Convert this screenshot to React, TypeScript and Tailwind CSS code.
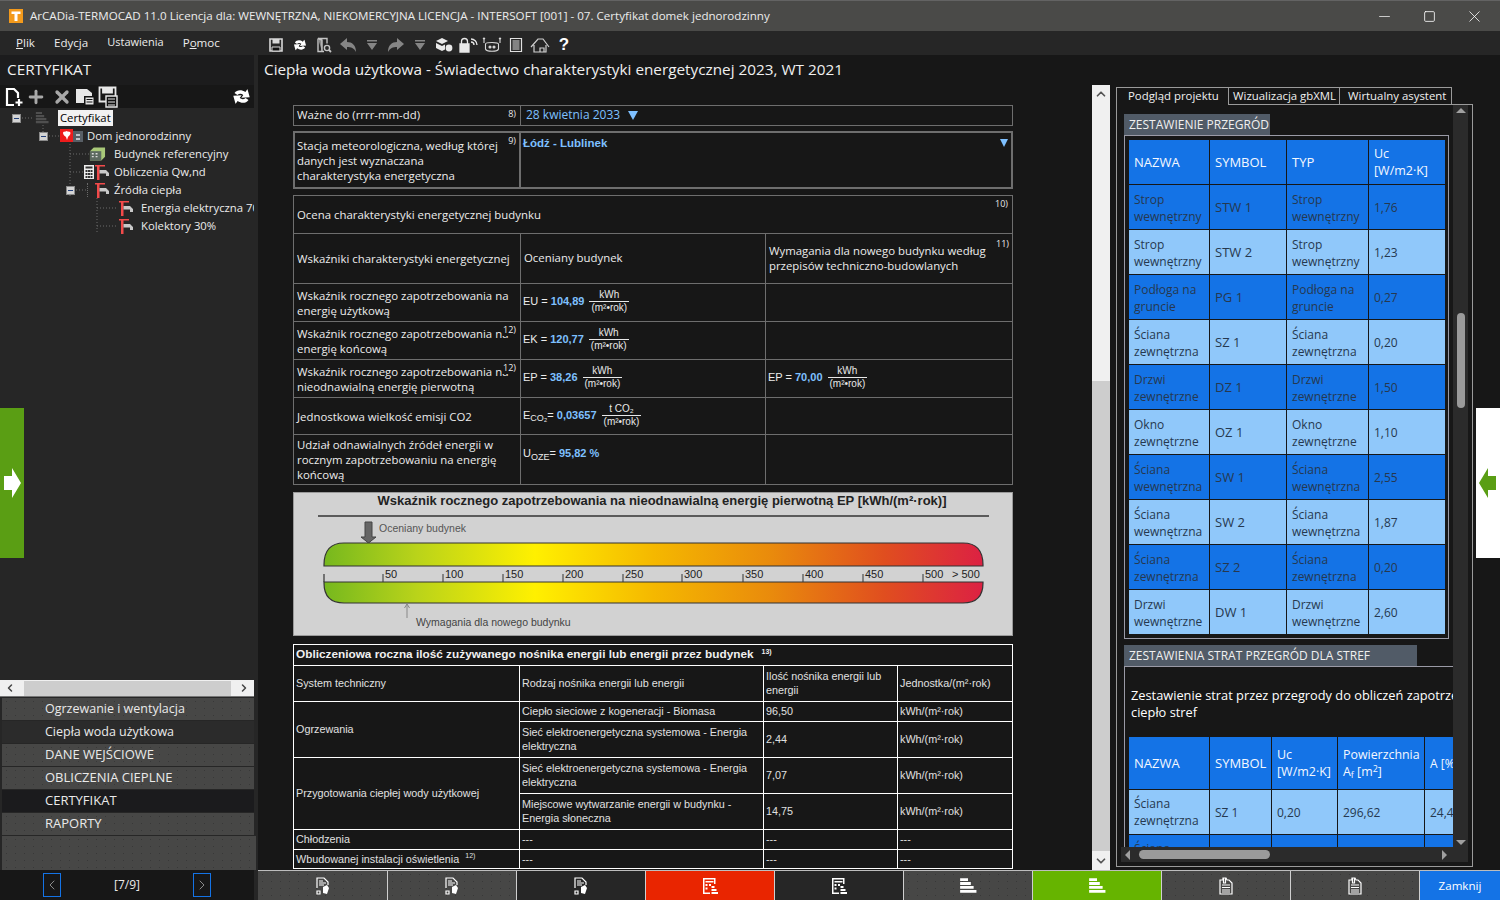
import { ChevronLeft, ChevronRight, ChevronUp, ChevronDown, Minus, Square, X, Plus } from "lucide-react";

const font = "[font-family:'Open_Sans',sans-serif]";
const arial = "[font-family:'Liberation_Sans',Arial,sans-serif]";
const dots =
  "bg-[#474746] bg-[radial-gradient(#383838_0.6px,transparent_0.8px)] bg-[length:9px_7px]";

// --- small drawn icons ---
function SaveIcon({ className = "" }: { className?: string }) {
  return (
    <svg viewBox="0 0 16 16" className={className} fill="none" stroke="currentColor" strokeWidth="1.6">
      <path d="M2 2h12v12H2z" />
      <path d="M4.5 2v4.5h7V2" fill="currentColor" stroke="none" />
      <path d="M4 10h8v4H4z" fill="#111" strokeWidth="1" />
    </svg>
  );
}

function SyncIcon({ className = "" }: { className?: string }) {
  return (
    <svg viewBox="0 0 16 16" className={className} fill="currentColor">
      <path d="M1.500 9C1.500 5.500 4.500 3 8.500 3V0l5.500 4.500L8.500 9V6C6 6 5 7 4.500 9z" />
      <path d="M14.500 7C14.500 10.500 11.500 13 7.500 13v3L2 11.500 7.500 7v3c2.500 0 3.500-1 4-3z" />
    </svg>
  );
}

function FileSearchIcon() {
  return (
    <svg viewBox="0 0 16 16" className="w-4 h-4 text-[#c4c4c4]" fill="none" stroke="currentColor" strokeWidth="1.4">
      <path d="M2 1.5h9v5M2 1.5v13h6" />
      <path d="M2 1.5l4 1.5v11.500" fill="#888" />
      <circle cx="11" cy="11" r="2.6" />
      <path d="M13 13l2 2" strokeWidth="1.8" />
    </svg>
  );
}

function ArrowBack({ flip = false }: { flip?: boolean }) {
  return (
    <svg viewBox="0 0 18 16" className={`w-[18px] h-4 text-[#858585] ${flip ? "-scale-x-100" : ""}`} fill="currentColor">
      <path d="M1 7l7-6v4c5 0 9 3 9 10-2-4-5-5-9-5v3z" />
    </svg>
  );
}

function DropMark() {
  return (
    <svg viewBox="0 0 12 12" className="w-3 h-3 text-[#858585]" fill="currentColor">
      <path d="M1 1h10v1.500H1zM1 4h10L6 11z" />
    </svg>
  );
}

function BoxesIcon() {
  return (
    <svg viewBox="0 0 18 16" className="w-[18px] h-4 text-[#e8e8e8]" fill="currentColor">
      <path d="M7 1l6 3-6 3-6-3z" />
      <path d="M1 6l6 3 3-1.500v5L7 14l-6-3z" />
      <circle cx="14" cy="11" r="3.400" />
    </svg>
  );
}

function LockWifi() {
  return (
    <svg viewBox="0 0 20 16" className="w-5 h-4 text-[#e8e8e8]" fill="none" stroke="currentColor" strokeWidth="1.300">
      <path d="M3.500 7V4.500a3 3 0 0 1 6 0V7" />
      <path d="M2 7h9v8H2z" fill="currentColor" />
      <path d="M13 5a3 3 0 0 1 3 3M13 2a6 6 0 0 1 6 6" />
    </svg>
  );
}

function BotIcon() {
  return (
    <svg viewBox="0 0 20 16" className="w-5 h-4 text-[#d8d8d8]" fill="none" stroke="currentColor" strokeWidth="1.100">
      <path d="M3.500 7c0-2 13-2 13 0v5c-1 3-12 3-13 0z" />
      <circle cx="8" cy="10" r="1" fill="currentColor" />
      <circle cx="12" cy="10" r="1" fill="currentColor" />
      <path d="M2 6V1M18 6V1M1 2l1-1 1 1M17 2l1-1 1 1" />
    </svg>
  );
}

function ClipIcon() {
  return (
    <svg viewBox="0 0 14 16" className="w-3.5 h-4 text-[#e0e0e0]" fill="none" stroke="currentColor" strokeWidth="1.200">
      <path d="M1.500 1.500h11v13h-11z" />
      <path d="M3.500 4h7M3.500 6h7M3.500 8h7M3.500 10h7M3.500 12h7" />
    </svg>
  );
}

function HouseIcon() {
  return (
    <svg viewBox="0 0 20 16" className="w-5 h-4 text-[#d0d0d0]" fill="none" stroke="currentColor" strokeWidth="1.200">
      <path d="M1 10l7-8h5l6 8M4 8v7h12V8M10 15v-4h4v4" />
    </svg>
  );
}

function NewFile() {
  return (
    <svg viewBox="0 0 18 20" className="w-[18px] h-5 text-white" fill="none" stroke="currentColor" strokeWidth="2.200">
      <path d="M9 18H2V2h7l4 4v5" />
      <path d="M14 12v7M10.500 15.500h7" />
    </svg>
  );
}

function CopyFile() {
  return (
    <svg viewBox="0 0 20 20" className="w-5 h-5 text-[#e8e8e8]" fill="currentColor">
      <path d="M1 2h11l5 4v3H9v7H1z" />
      <path d="M10 10h9v8h-9z" stroke="#111" />
      <path d="M11.500 12.500h6M11.500 15h6" stroke="#111" strokeWidth="1" />
    </svg>
  );
}

function SaveList() {
  return (
    <svg viewBox="0 0 20 22" className="w-5 h-[22px] text-[#e8e8e8]" fill="none" stroke="currentColor" strokeWidth="1.800">
      <path d="M1.500 1.500h16v14h-16z" />
      <path d="M5 1.500v5h9v-5" fill="currentColor" />
      <path d="M8 10h11v11H8z" fill="#111" strokeWidth="1.400" />
      <path d="M10 13h7M10 16h7M10 19h7" strokeWidth="1.200" />
    </svg>
  );
}

function Faucet({ className = "" }: { className?: string }) {
  return (
    <svg viewBox="0 0 16 16" className={`w-4 h-4 shrink-0 ${className}`}>
      <path d="M1 1h10v1.500H1zM3 2.500h2.500V16H3z" fill="#f24a4a" />
      <path d="M5.500 6H12l3 3v3h-3V9.500H5.500z" fill="#c9c9c9" />
    </svg>
  );
}

function StackIcon({ className = "" }: { className?: string }) {
  return (
    <svg viewBox="0 0 16 16" className={className} fill="currentColor">
      <path d="M1 1h7v2.500H1zM1 4.500h9.500V7H1zM1 8h12v2.500H1zM1 11.500h14.500V14H1z" />
    </svg>
  );
}

function PageEdit() {
  return (
    <svg viewBox="0 0 14 18" className="w-3.5 h-[18px] text-white" fill="none" stroke="currentColor" strokeWidth="1.200">
      <path d="M1 11V1h7l4 4v3M1 17v-3h3v3z" />
      <path d="M3 4h4M3 6h7M3 8h5" />
      <path d="M7 10l4-2 2 3-2 6-4-1z" fill="currentColor" stroke="none" />
    </svg>
  );
}

function CalcList() {
  return (
    <svg viewBox="0 0 16 18" className="w-4 h-[18px] text-white" fill="currentColor">
      <path d="M1 1h12v1.500H1zM1 1h1.500v16H1zM12 1h1.500v6H12zM1 15.500h7V17H1z" />
      <path d="M3.500 4h8v1.500h-8zM3.500 7h2v2h-2zM7 7h2v2H7zM3.500 10.500h2v2h-2zM9.500 9h3v2h-3zM9.500 12h5v2h-5zM9.500 15h6.500v2H9.500z" />
    </svg>
  );
}

function PageList() {
  return (
    <svg viewBox="0 0 14 18" className="w-3.5 h-[18px] text-white" fill="none" stroke="currentColor" strokeWidth="1.200">
      <path d="M4 1h3l1 2h2l3 3v11H1V3h3z" />
      <path d="M3 8h8M3 10.500h8M3 13h8M3 15h8" />
      <path d="M4.500 1v5h2V1" />
    </svg>
  );
}

// --- left tree ---
function ExpandBox() {
  return (
    <span className="w-[9px] h-[9px] bg-[#d4d4d4] border border-[#8a8a8a] flex items-center justify-center shrink-0">
      <span className="w-[5px] h-px bg-[#23407a]" />
    </span>
  );
}

const treeRows = [
  { pl: "pl-[12px]", box: true, icon: "stack", label: "Certyfikat", selected: true },
  { pl: "pl-[39px]", box: true, icon: "home", label: "Dom jednorodzinny" },
  { pl: "pl-[89px]", icon: "cube", label: "Budynek referencyjny" },
  { pl: "pl-[84px]", icon: "calc", label: "Obliczenia Qw,nd" },
  { pl: "pl-[66px]", box: true, icon: "source", label: "Źródła ciepła" },
  { pl: "pl-[118px]", icon: "faucet", label: "Energia elektryczna 70%" },
  { pl: "pl-[118px]", icon: "faucet", label: "Kolektory 30%" },
];

function TreeIcon({ kind }: { kind: string }) {
  if (kind === "stack") return <StackIcon className="w-3.5 h-3.5 text-[#4f4f4f] ml-[12px] mr-[9px] shrink-0" />;
  if (kind === "home")
    return (
      <svg viewBox="0 0 24 14" className="w-6 h-3.5 ml-[10px] mr-[3px] shrink-0">
        <path d="M0 0h13v13H0z" fill="#ee1c1c" />
        <path d="M6.500 2c1 1 4 0 4 2s-2 3-2.500 4l-1 3-1-3C5 7 3 6 3 4s2.500-1 3.500-2z" fill="#fff" />
        <path d="M13 2h10v11H13z" fill="#585f66" />
        <path d="M16 5h4v2h-4zM16 9h4v2h-4z" fill="#c0c4c8" />
      </svg>
    );
  if (kind === "cube")
    return (
      <svg viewBox="0 0 18 16" className="w-[17px] h-4 mr-2 shrink-0">
        <path d="M1 5l4-4h12v10l-4 4H1z" fill="#a8c878" />
        <path d="M1 5h12v10H1z" fill="#5c6a60" />
        <path d="M3 7h2v1.500H3zM7 7h2v1.500H7zM3 10h2v1.500H3zM7 10h2v1.500H7z" fill="#ddd" />
      </svg>
    );
  if (kind === "calc")
    return (
      <span className="flex items-center mr-[4px] shrink-0">
        <svg viewBox="0 0 10 14" className="w-2.5 h-3.5">
          <path d="M0 0h10v14H0z" fill="#eee" />
          <path d="M1.500 1.500h7v2h-7zM1.500 5h2v2h-2zM4 5h2v2H4zM6.500 5h2v2h-2zM1.500 8h2v2h-2zM4 8h2v2H4zM6.500 8h2v2h-2zM1.500 11h2v2h-2zM4 11h2v2H4zM6.500 11h2v2h-2z" fill="#333" />
        </svg>
        <Faucet />
      </span>
    );
  if (kind === "source")
    return (
      <span className="flex items-center ml-[10px] mr-[4px] shrink-0">
        <span className="w-[3px] h-3.5 mr-[4px] border-l border-dotted border-[#6a6a6a]" />
        <Faucet />
      </span>
    );
  return <Faucet className="mr-[7px]" />;
}

function LeftPanel() {
  return (
    <aside className="w-[258px] shrink-0 flex flex-col bg-[#262626] relative">
      <div className="h-[30px] w-[254px] flex items-center px-[7px] pb-[2px] text-[15.300px] text-[#f0f0f0] bg-[#1c1c1d]">CERTYFIKAT</div>
      <div className="h-[23px] w-[254px] bg-[#171717] flex items-center pl-[5px] pr-[3px] gap-[3px]">
        <NewFile />
        <Plus className="w-5 h-5 text-[#a8a8a8]" strokeWidth={3.5} />
        <X className="w-5 h-5 text-[#a8a8a8] ml-[3px]" strokeWidth={4} />
        <CopyFile />
        <SaveList />
        <SyncIcon className="w-[19px] h-[19px] text-white ml-auto rotate-[35deg]" />
      </div>
      <div className="flex-1 relative w-[254px] overflow-hidden pt-[1px]">
        <svg className="absolute left-0 top-0 w-[254px] h-[130px] text-[#6a6a6a]" fill="none" stroke="currentColor" strokeDasharray="1 2">
          <path d="M22 10h11M43 14v13M49 28h10M70 36v54M70 46h19M70 64h14M76 82h10M97 90v36M97 100h19M97 118h19" />
        </svg>
        {treeRows.map((r) => (
          <div key={r.label} className={`h-[18px] flex items-center whitespace-nowrap text-[11.300px] text-[#ececec] relative ${r.pl}`}>
            {r.box && <span className="mr-[2px]"><ExpandBox /></span>}
            <TreeIcon kind={r.icon} />
            {r.selected ? (
              <span className="bg-[#f2f2f2] text-black px-[2px] h-4 flex items-center">{r.label}</span>
            ) : (
              <span>{r.label}</span>
            )}
          </div>
        ))}
      </div>
      <div className="h-[17px] w-[254px] bg-[#f0f0f0] flex items-center justify-between px-[4px] border-b border-[#777]">
        <ChevronLeft className="w-3 h-3 text-[#444]" strokeWidth={3} />
        <div className="h-[15px] w-[207px] bg-[#cdcdcd]" />
        <ChevronRight className="w-3 h-3 text-[#444]" strokeWidth={3} />
      </div>
      <div className="pl-[2px] w-[254px] flex flex-col gap-px pt-px text-[#eaeaea]">
        {[
          { t: "Ogrzewanie i wentylacja", c: `${dots} text-[12.500px]` },
          { t: "Ciepła woda użytkowa", c: "bg-[#2b2b2b] text-[12.500px]" },
          { t: "DANE WEJŚCIOWE", c: `${dots} text-[13px]` },
          { t: "OBLICZENIA CIEPLNE", c: `${dots} text-[13px]` },
          { t: "CERTYFIKAT", c: "bg-[#1b1b1d] text-[13px]" },
          { t: "RAPORTY", c: `${dots} text-[13px]` },
        ].map((i) => (
          <div key={i.t} className={`h-[22px] flex items-center pl-[43px] ${i.c}`}>{i.t}</div>
        ))}
      </div>
      <div className={`h-[34px] w-[254px] ml-[2px] mt-px ${dots}`} />
      <div className="h-[30px] bg-[#171717] w-[254px] flex items-center text-[12px] text-[#eaeaea]">
        <button className="ml-[43px] w-[18px] h-[24px] border border-[#1473e6] flex items-center justify-center">
          <ChevronLeft className="w-4 h-4 text-[#8a8a8a]" strokeWidth={1.500} />
        </button>
        <span className="flex-1 text-center">[7/9]</span>
        <button className="mr-[43px] w-[18px] h-[24px] border border-[#1473e6] flex items-center justify-center">
          <ChevronRight className="w-4 h-4 text-[#8a8a8a]" strokeWidth={1.500} />
        </button>
      </div>
    </aside>
  );
}

// --- certificate document ---
function Sup({ children, className = "" }: { children: string; className?: string }) {
  return <span className={`absolute top-[3px] right-[4px] text-[9px] leading-[10px] text-[#e8e8e8] ${className}`}>{children}</span>;
}

function Frac({ top, unit = "(m²•rok)" }: { top: string; unit?: string }) {
  return (
    <span className={`inline-flex flex-col items-center text-[10px] leading-[12px] text-[#e8e8e8] ${arial} ml-[2px]`}>
      <span className="border-b border-[#e8e8e8] px-[2px] w-full text-center">{top}</span>
      <span className="px-[2px]">{unit}</span>
    </span>
  );
}

function Val({ children }: { children: string }) {
  return <b className="text-[#7ec0ff] text-[11px] mx-[3px]">{children}</b>;
}

function IndexRow({
  h,
  label,
  sup,
  left,
  right,
}: {
  h: string;
  label: string[];
  sup?: string;
  left: React.ReactNode;
  right?: React.ReactNode;
}) {
  return (
    <>
      <div className={`${h} border-r border-b border-[#6e6e6e] relative flex flex-col justify-center px-[3px] leading-[15px] overflow-hidden whitespace-nowrap`}>
        {label.map((l) => <span key={l}>{l}</span>)}
        {sup && <span className="absolute top-[2px] right-0 pl-px pr-[4px] bg-[#171717] text-[9px] leading-[12px]">{sup}</span>}
      </div>
      <div className={`${h} border-r border-b border-[#6e6e6e] flex items-center pl-[2px] pb-[2px] text-[11px] ${arial}`}>{left}</div>
      <div className={`${h} border-b border-[#6e6e6e] flex items-center pl-[2px] pb-[2px] text-[11px] ${arial}`}>{right}</div>
    </>
  );
}

function Gauge() {
  const ticks = [
    [65, "50"], [125, "100"], [185, "150"], [245, "200"], [305, "250"],
    [364, "300"], [425, "350"], [485, "400"], [545, "450"], [605, "500"],
  ] as const;
  return (
    <div className={`h-[144px] bg-[#d2d2d2] border border-[#9a9a9a] mt-[7px] flex flex-col ${arial}`}>
      <div className="text-center text-[13px] font-bold text-[#222] leading-[16px] pl-[18px]">
        Wskaźnik rocznego zapotrzebowania na nieodnawialną energię pierwotną EP [kWh/(m²·rok)]
      </div>
      <svg viewBox="0 0 718 126" className="w-[718px] h-[126px]">
        <defs>
          <linearGradient id="scale" x1="0" x2="1" y1="0" y2="0">
            <stop offset="0" stopColor="#76b81e" />
            <stop offset="0.14" stopColor="#b9d31a" />
            <stop offset="0.32" stopColor="#fff000" />
            <stop offset="0.5" stopColor="#f5b800" />
            <stop offset="0.68" stopColor="#e98a0c" />
            <stop offset="0.85" stopColor="#e04e1f" />
            <stop offset="1" stopColor="#dc2143" />
          </linearGradient>
        </defs>
        <path d="M24 7h671" stroke="#333" strokeWidth="1.500" />
        <path d="M71 13h7v15h4l-7.500 6-7.500-6h4z" fill="#666" stroke="#444" />
        <text x="85" y="23" fontSize="10.500" fill="#555">Oceniany budynek</text>
        <path d="M30 57V56q0-22 20-22h619q20 0 20 22v1z" fill="url(#scale)" stroke="#333" strokeWidth="1.200" />
        <path d="M30 73h659v1q0 20-20 20H50q-20 0-20-20z" fill="url(#scale)" stroke="#333" strokeWidth="1.200" />
        <path d="M30 65v8" stroke="#333" strokeWidth="1.200" />
        {ticks.map(([x, t]) => (
          <g key={t}>
            <path d={`M${x + 24} 65v8`} stroke="#333" />
            <text x={x + 26} y="69" fontSize="11" fill="#222">{t}</text>
          </g>
        ))}
        <text x="658" y="69" fontSize="11" fill="#222">{"> 500"}</text>
        <path d="M113 109V95M110.500 99l2.500-4 2.500 4" stroke="#888" fill="none" />
        <text x="122" y="117" fontSize="10.500" fill="#444">Wymagania dla nowego budynku</text>
      </svg>
    </div>
  );
}

function CarrierTable() {
  const c = "border-r border-b border-white flex items-center px-[2px] pb-px leading-[14px] overflow-hidden";
  const last = "border-b border-white flex items-center px-[2px] pb-px leading-[14px]";
  return (
    <div className={`mt-[8px] border-t border-l border-r border-white text-[10.800px] text-[#e0e0e0] ${arial}`}>
      <div className="h-[21px] border-b border-white flex items-center px-[2px] text-[11.800px] font-bold text-[#f0f0f0] relative">
        Obliczeniowa roczna ilość zużywanego nośnika energii lub energii przez budynek
        <span className="text-[7px] ml-[8px] -mt-[6px]">13)</span>
      </div>
      <div className="grid grid-cols-[226px_244px_134px_114px] grid-rows-[36px_20px_36px_36px_36px_20px_19px]">
        <div className={c}>System techniczny</div>
        <div className={c}>Rodzaj nośnika energii lub energii</div>
        <div className={c}>Ilość nośnika energii lub energii</div>
        <div className={last}>Jednostka/(m²·rok)</div>

        <div className={`${c} row-span-2`}>Ogrzewania</div>
        <div className={c}>Ciepło sieciowe z kogeneracji - Biomasa</div>
        <div className={c}>96,50</div>
        <div className={last}>kWh/(m²·rok)</div>
        <div className={c}>Sieć elektroenergetyczna systemowa - Energia elektryczna</div>
        <div className={c}>2,44</div>
        <div className={last}>kWh/(m²·rok)</div>

        <div className={`${c} row-span-2`}>Przygotowania ciepłej wody użytkowej</div>
        <div className={c}>Sieć elektroenergetyczna systemowa - Energia elektryczna</div>
        <div className={c}>7,07</div>
        <div className={last}>kWh/(m²·rok)</div>
        <div className={c}>Miejscowe wytwarzanie energii w budynku - Energia słoneczna</div>
        <div className={c}>14,75</div>
        <div className={last}>kWh/(m²·rok)</div>

        <div className={c}>Chłodzenia</div>
        <div className={c}>---</div>
        <div className={c}>---</div>
        <div className={last}>---</div>

        <div className={c}>
          Wbudowanej instalacji oświetlenia<span className="text-[7px] ml-[6px] -mt-[6px]">12)</span>
        </div>
        <div className={c}>---</div>
        <div className={c}>---</div>
        <div className={last}>---</div>
      </div>
    </div>
  );
}

function Certificate() {
  return (
    <div className="flex-1 min-w-0 bg-[#171717] pt-[20px] pl-[35px] overflow-hidden text-[11.400px] text-[#ececec]">
      <div className="w-[720px]">
        <div className="h-[21px] border border-[#6e6e6e] flex">
          <div className="w-[227px] border-r border-[#6e6e6e] px-[3px] pb-px flex items-center relative">
            Ważne do (rrrr-mm-dd)
            <Sup>8)</Sup>
          </div>
          <div className="px-[5px] pb-[2px] flex items-center text-[12px] text-[#7ec0ff]">
            28 kwietnia 2033
            <span className="ml-[8px] mt-[1px] w-0 h-0 border-x-[5px] border-x-transparent border-t-[9px] border-t-[#7ec0ff]" />
          </div>
        </div>

        <div className="h-[58px] mt-[5px] border-2 border-[#6e6e6e] flex">
          <div className="w-[226px] border-r-2 border-[#6e6e6e] px-[2px] flex flex-col justify-center leading-[15px] pt-[1px] relative whitespace-nowrap">
            <span>Stacja meteorologiczna, według której</span>
            <span>danych jest wyznaczana</span>
            <span>charakterystyka energetyczna</span>
            <Sup className="!right-[3px]">9)</Sup>
          </div>
          <div className={`flex-1 flex justify-between px-[2px] pt-[2px] text-[#7ec0ff] ${arial} text-[11.500px] font-bold`}>
            <span>Łódź - Lublinek</span>
            <span className="mt-[4px] mr-[1px] w-0 h-0 border-x-[4px] border-x-transparent border-t-[8px] border-t-[#7ec0ff]" />
          </div>
        </div>

        <div className="mt-[6px] border-t border-l border-r border-[#6e6e6e]">
          <div className="h-[38px] border-b border-[#6e6e6e] flex items-center px-[3px] relative">
            Ocena charakterystyki energetycznej budynku
            <Sup>10)</Sup>
          </div>
          <div className="grid grid-cols-[227px_245px_246px]">
            <IndexRow h="h-[50px]" label={["Wskaźniki charakterystyki energetycznej"]} left={<span className={`${font} text-[11.400px] pl-[1px]`}>Oceniany budynek</span>} right={
              <span className={`${font} text-[11.400px] leading-[15px] pl-[1px] pr-[15px] relative`}>
                Wymagania dla nowego budynku według przepisów techniczno-budowlanych
                <span className="absolute -top-[7px] right-[3px] text-[9px]">11)</span>
              </span>
            } />
            <IndexRow h="h-[38px]" label={["Wskaźnik rocznego zapotrzebowania na", "energię użytkową"]} left={<>EU =<Val>104,89</Val><Frac top="kWh" /></>} />
            <IndexRow h="h-[38px]" sup="12)" label={["Wskaźnik rocznego zapotrzebowania na", "energię końcową"]} left={<>EK =<Val>120,77</Val><Frac top="kWh" /></>} />
            <IndexRow h="h-[38px]" sup="12)" label={["Wskaźnik rocznego zapotrzebowania na", "nieodnawialną energię pierwotną"]} left={<>EP =<Val>38,26</Val><Frac top="kWh" /></>} right={<>EP =<Val>70,00</Val><Frac top="kWh" /></>} />
            <IndexRow h="h-[37px]" label={["Jednostkowa wielkość emisji CO2"]} left={<>E<sub className="text-[9px] -bottom-[3px]">CO₂</sub>=<Val>0,03657</Val><Frac top="t CO₂" /></>} />
            <IndexRow h="h-[50px]" label={["Udział odnawialnych źródeł energii w", "rocznym zapotrzebowaniu na energię", "końcową"]} left={<span className="-mt-[10px]">U<sub className="text-[9px] -bottom-[3px]">OZE</sub>=<Val>95,82 %</Val></span>} />
          </div>
        </div>

        <Gauge />
        <CarrierTable />
      </div>
    </div>
  );
}

// --- right panel ---
const walls = [
  ["Strop wewnętrzny", "STW 1", "Strop wewnętrzny", "1,76"],
  ["Strop wewnętrzny", "STW 2", "Strop wewnętrzny", "1,23"],
  ["Podłoga na gruncie", "PG 1", "Podłoga na gruncie", "0,27"],
  ["Ściana zewnętrzna", "SZ 1", "Ściana zewnętrzna", "0,20"],
  ["Drzwi zewnętrzne", "DZ 1", "Drzwi zewnętrzne", "1,50"],
  ["Okno zewnętrzne", "OZ 1", "Okno zewnętrzne", "1,10"],
  ["Ściana wewnętrzna", "SW 1", "Ściana wewnętrzna", "2,55"],
  ["Ściana wewnętrzna", "SW 2", "Ściana wewnętrzna", "1,87"],
  ["Ściana zewnętrzna", "SZ 2", "Ściana zewnętrzna", "0,20"],
  ["Drzwi wewnętrzne", "DW 1", "Drzwi wewnętrzne", "2,60"],
];

function SectionHead({ className, children }: { className: string; children: string }) {
  return <div className={`h-[21px] bg-[#515b67] flex items-center px-[5px] text-[12px] whitespace-nowrap text-[#f0f0f0] ${className}`}>{children}</div>;
}

function RightPanel() {
  return (
    <div className={`w-[390px] shrink-0 bg-[#171717] pl-[6px] pt-[2px] ${font}`}>
      <div className="w-[357px] h-[780px] flex flex-col text-[12px]">
        <div className="flex h-[18px] text-[11.400px] leading-[15px] whitespace-nowrap text-[#f0f0f0] relative z-10">
          <div className="w-[112px] border-l border-t border-[#9a9a9a] bg-[#171717] h-[18px] pl-[11px]">Podgląd projektu</div>
          <div className="w-[112px] border-l border-t border-r border-b border-[#9a9a9a] pl-[4px]">Wizualizacja gbXML</div>
          <div className="w-[112px] border-t border-r border-b border-[#9a9a9a] pl-[8px]">Wirtualny asystent</div>
        </div>
        <div className="flex-1 min-h-0 -mt-px border border-[#9a9a9a] flex flex-col pl-[4px] pr-[4px] pb-[4px]">
          <div className="flex-1 min-h-0 flex">
            <div className="flex-1 min-w-0 overflow-hidden pl-[3px] pt-[9px]">
              <SectionHead className="w-[146px]">ZESTAWIENIE PRZEGRÓD</SectionHead>
              <div className="w-[325px] border border-[#9a9aa6] p-[4px]">
                <div className="grid grid-cols-[80px_76px_81px_76px] gap-px">
                  {["NAZWA", "SYMBOL", "TYP", "Uc [W/m2·K]"].map((h) => (
                    <div key={h} className={`h-[44px] bg-[#1473e6] text-[#f4f8ff] flex items-center px-[5px] leading-[17px] ${h === "Uc [W/m2·K]" ? "text-[12.500px]" : "text-[13px]"}`}>{h}</div>
                  ))}
                  {walls.map((row, i) =>
                    row.map((t, j) => (
                      <div key={`${i}-${j}`} className={`h-[44px] flex items-center px-[5px] pt-px leading-[17px] text-[#26384f] ${j === 1 ? "text-[13px]" : ""} ${i % 2 === 0 ? "bg-[#1473e6]" : "bg-[#90c8fa]"}`}>{t}</div>
                    ))
                  )}
                </div>
              </div>
              <SectionHead className="w-[293px] mt-[6px]">ZESTAWIENIA STRAT PRZEGRÓD DLA STREF</SectionHead>
              <div className="w-[420px] border-t border-l border-[#9a9aa6] pl-[4px]">
                <p className="w-[360px] text-[12.800px] leading-[17px] text-white pl-[2px] pt-[20px] pb-[16px] whitespace-nowrap">
                  Zestawienie strat przez przegrody do obliczeń zapotrzebowania na<br />ciepło stref
                </p>
                <div className="grid grid-cols-[80px_61px_65px_86px_90px] gap-px">
                  {[
                    <span className="text-[13px]">NAZWA</span>,
                    <span className="text-[13px]">SYMBOL</span>,
                    <span className="text-[12.500px]">Uc [W/m2·K]</span>,
                    <span className="text-[12.400px]">Powierzchnia A<sub className="text-[9px]">f</sub> [m<sup className="text-[9px]">2</sup>]</span>,
                    <>A [%]</>,
                  ].map((h, i) => (
                    <div key={i} className="h-[52px] bg-[#1473e6] text-[#f4f8ff] flex items-center px-[5px] leading-[17px]"><span>{h}</span></div>
                  ))}
                  {[
                    ["Ściana zewnętrzna", "SZ 1", "0,20", "296,62", "24,45"],
                    ["Ściana zewnętrzna", "SW 1", "2,55", "18,40", "3,10"],
                  ].map((row, i) =>
                    row.map((t, j) => (
                      <div key={`${i}-${j}`} className={`h-[44px] flex items-center px-[5px] leading-[17px] text-[#26384f] ${i === 0 ? "bg-[#90c8fa]" : "bg-[#1473e6]"}`}>{t}</div>
                    ))
                  )}
                </div>
              </div>
            </div>
            <div className="w-[15px] shrink-0 bg-[#2b2b2b] flex flex-col items-center justify-between pt-[3px] pb-[2px]">
              <span className="w-0 h-0 border-x-[5px] border-x-transparent border-b-[5px] border-b-[#a0a0a0]" />
              <div className="w-[8px] h-[95px] bg-[#9a9a9a] rounded-sm -mt-[232px]" />
              <span className="w-0 h-0 border-x-[5px] border-x-transparent border-t-[5px] border-t-[#a0a0a0]" />
            </div>
          </div>
          <div className="h-[15px] bg-[#2b2b2b] flex items-center justify-between px-[4px] shrink-0">
            <span className="w-0 h-0 border-y-[5px] border-y-transparent border-r-[5px] border-r-[#a0a0a0]" />
            <div className="w-[131px] h-[9px] bg-[#9a9a9a] rounded-full ml-[9px] mr-auto" />
            <span className="w-0 h-0 border-y-[5px] border-y-transparent border-l-[5px] border-l-[#a0a0a0] mr-[17px]" />
          </div>
        </div>
      </div>
    </div>
  );
}

const bottomButtons = [
  { bg: `${dots} w-[130px]`, icon: <PageEdit /> },
  { bg: `${dots} w-[129px]`, icon: <PageEdit /> },
  { bg: "bg-[#262626] w-[129px]", icon: <PageEdit /> },
  { bg: "bg-[#e92500] w-[129px]", icon: <CalcList /> },
  { bg: "bg-[#262626] w-[129px]", icon: <CalcList /> },
  { bg: `${dots} w-[129px]`, icon: <StackIcon className="w-[18px] h-[18px] text-white" /> },
  { bg: "bg-[#66b400] w-[129px]", icon: <StackIcon className="w-[18px] h-[18px] text-white" /> },
  { bg: `${dots} w-[129px]`, icon: <PageList /> },
  { bg: `${dots} w-[129px]`, icon: <PageList /> },
];

export default function App() {
  return (
    <div className={`w-[1500px] h-[900px] overflow-hidden flex flex-col bg-[#171717] relative ${font}`}>
      <div className="h-[31px] shrink-0 bg-[#4a4a48] border-t border-[#636363] flex items-center text-[11.600px] text-[#ececec] pl-[9px]">
        <svg viewBox="0 0 14 14" className="w-[14px] h-[14px] mr-[7px]">
          <path d="M0 0h14v14H0z" fill="#f39a1c" />
          <path d="M2.500 2.500h9v2.500H8.500v7h-3V5h-3z" fill="#fff" />
        </svg>
        <span>ArCADia-TERMOCAD 11.0 Licencja dla: WEWNĘTRZNA, NIEKOMERCYJNA LICENCJA - INTERSOFT [001] - 07. Certyfikat domek jednorodzinny</span>
        <div className="ml-auto flex items-center pr-[3px] text-white">
          <span className="w-[45px] flex justify-center"><Minus className="w-[17px] h-[17px]" strokeWidth={1} /></span>
          <span className="w-[45px] flex justify-center"><Square className="w-[13px] h-[13px]" strokeWidth={1.500} /></span>
          <span className="w-[45px] flex justify-center"><X className="w-[19px] h-[19px]" strokeWidth={1} /></span>
        </div>
      </div>

      <div className="h-[24px] shrink-0 bg-[#262626] flex items-center text-[11.600px] text-[#ececec]">
        <div className="w-[264px] shrink-0 flex pl-[16px] gap-[19px]">
          <span><span className="underline">P</span>lik</span>
          <span>Edycja</span>
          <span className="text-[11px]">Ustawienia</span>
          <span>P<span className="underline">o</span>moc</span>
        </div>
        <div className="flex items-center mt-[3px]">
          {[
            <SaveIcon className="w-4 h-4 text-[#d8d8d8]" />,
            <SyncIcon className="w-[14px] h-[14px] text-white rotate-[35deg]" />,
            <FileSearchIcon />,
            <ArrowBack />,
            <DropMark />,
            <ArrowBack flip />,
            <DropMark />,
            <BoxesIcon />,
            <LockWifi />,
            <BotIcon />,
            <ClipIcon />,
            <HouseIcon />,
            <span className={`text-[17px] font-bold text-white ${arial}`}>?</span>,
          ].map((icon, i) => (
            <span key={i} className="w-6 h-6 flex items-center justify-center">{icon}</span>
          ))}
        </div>
      </div>

      <div className="flex-1 min-h-0 flex">
        <LeftPanel />
        <div className="flex-1 min-w-0 flex flex-col">
          <div className="h-[30px] shrink-0 flex items-center pl-[6px] pb-[2px] text-[15.300px] text-[#f0f0f0]">
            Ciepła woda użytkowa - Świadectwo charakterystyki energetycznej 2023, WT 2021
          </div>
          <div className="flex-1 min-h-0 flex">
            <Certificate />
            <div className="w-[18px] shrink-0 bg-[#f0f0f0] flex flex-col items-center justify-between py-[2px]">
              <ChevronUp className="w-3.5 h-3.5 text-[#555]" strokeWidth={3} />
              <div className="w-full h-[470px] bg-[#cdcdcd] mt-auto" />
              <ChevronDown className="w-3.5 h-3.5 text-[#555] mt-[3px]" strokeWidth={3} />
            </div>
            <RightPanel />
          </div>
          <div className="h-[30px] shrink-0 flex border-t border-[#bdbdbd]">
            {bottomButtons.map((b, i) => (
              <div key={i} className={`border-r border-[#cfcfcf] flex items-center justify-center ${b.bg}`}>{b.icon}</div>
            ))}
            <div className="flex-1 bg-[#1473e6] text-white text-[11.600px] flex items-center justify-center">Zamknij</div>
          </div>
        </div>
      </div>

      <div className="absolute left-0 top-[408px] w-[24px] h-[150px] bg-[#5a9e14] flex items-center justify-center">
        <svg viewBox="0 0 20 30" className="w-[20px] h-[30px]">
          <path d="M2 8h8V0l9 15-9 15v-8H2z" fill="#fff" />
        </svg>
      </div>
      <div className="absolute right-0 top-[408px] w-[24px] h-[150px] bg-white flex items-center justify-center">
        <svg viewBox="0 0 20 30" className="w-[20px] h-[30px]">
          <path d="M18 8h-8V0L1 15l9 15v-8h8z" fill="#5a9e14" />
        </svg>
      </div>
    </div>
  );
}
